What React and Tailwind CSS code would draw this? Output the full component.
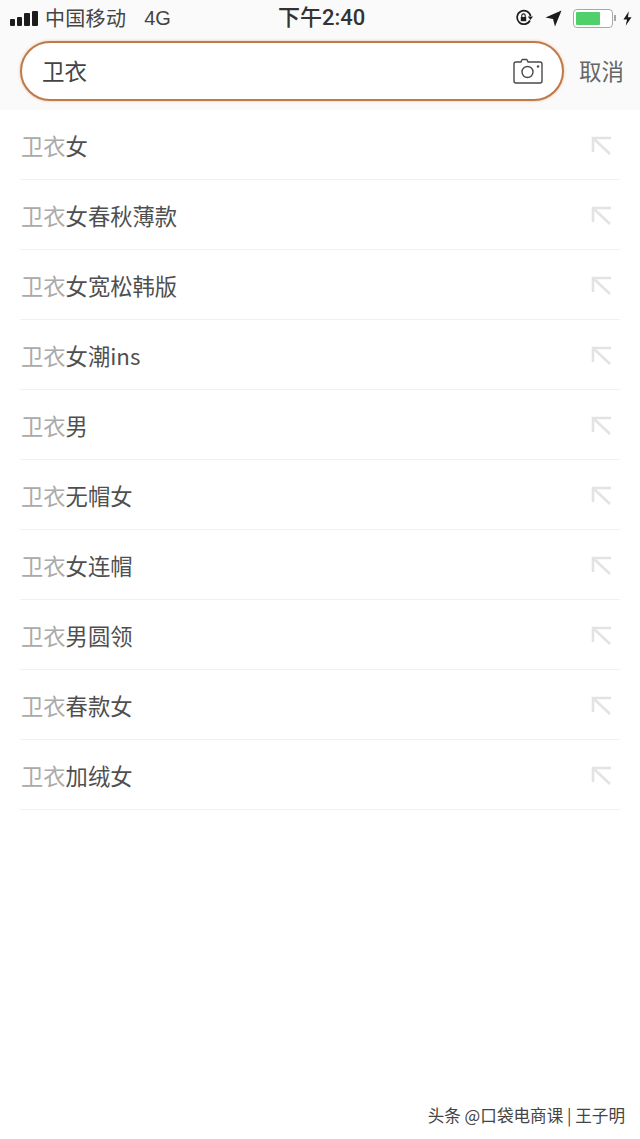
const suggestions = ['女', '女春秋薄款', '女宽松韩版', '女潮ins', '男', '无帽女', '女连帽', '男圆领', '春款女', '加绒女'];

function ArrowIcon() {
  return (
    <svg width="22" height="20" viewBox="0 0 22 20" fill="none" stroke="#e3e3e5" strokeWidth="2.6" className="mt-[1px]">
      <path d="M2 16V2H20" />
      <path d="M3 3L19 18" />
    </svg>
  );
}

function CameraIcon() {
  return (
    <svg width="32" height="30" viewBox="0 0 32 30" fill="none" stroke="#4a4a4a" strokeWidth="1.4">
      <path d="M3.5 6H9l1-2.5h0M15 3.5h-5M15 3.5l1 2.5h12a2 2 0 0 1 2 2v17a2 2 0 0 1-2 2H4a2 2 0 0 1-2-2V8a2 2 0 0 1 2-2" />
      <circle cx="15.5" cy="16" r="5.5" />
      <circle cx="26" cy="10.5" r="1.2" fill="#4a4a4a" stroke="none" />
    </svg>
  );
}

function StatusBar() {
  return (
    <div className="h-[36px] flex items-center justify-between pl-[10px] pr-[8px] text-[#2a2a2a]">
      <div className="flex items-center w-[230px]">
        <div className="flex items-end gap-[2px] h-[15px] mr-[7px]">
          <div className="w-[5px] h-[7px] bg-[#1c1c1c] rounded-[1px]" />
          <div className="w-[5px] h-[9px] bg-[#1c1c1c] rounded-[1px]" />
          <div className="w-[6px] h-[13px] bg-[#1c1c1c] rounded-[1px]" />
          <div className="w-[6px] h-[15px] bg-[#1c1c1c] rounded-[1px]" />
        </div>
        <span className="text-[20px] leading-none tracking-[0.3px] text-[#444444]">中国移动</span>
        <span className="text-[20px] leading-none ml-[18px] font-['Liberation_Sans',sans-serif] text-[#444444]">4G</span>
      </div>
      <div className="text-[22px] leading-none font-medium absolute left-[278px] font-['Roboto','Noto_Sans_CJK_SC',sans-serif] text-[#333333]">下午2:40</div>
      <div className="flex items-center">
        <svg width="18" height="18" viewBox="0 0 18 18" fill="none" className="mr-[12px]">
          <path d="M15 11.5A6.8 6.8 0 1 1 15.6 7" stroke="#1c1c1c" strokeWidth="1.7" />
          <path d="M12.8 7.5H18L15.4 11Z" fill="#1c1c1c" />
          <rect x="5.8" y="8" width="5.4" height="4.2" fill="#1c1c1c" />
          <path d="M6.8 8V6.6a1.7 1.7 0 0 1 3.4 0V8" stroke="#1c1c1c" strokeWidth="1.1" />
        </svg>
        <svg width="17" height="17" viewBox="0 0 17 17" className="mr-[11px]">
          <path d="M16.5 0.5L10 16.5L8 9L0.5 7.5Z" fill="#1c1c1c" />
        </svg>
        <div className="w-[40px] h-[19px] rounded-[4px] border-[1.5px] border-[#a8a8a8] p-[2px] bg-white">
          <div className="w-[24px] h-full bg-[#4fd06a] rounded-[1px]" />
        </div>
        <div className="w-[2px] h-[6px] bg-[#a8a8a8] ml-[1px] mr-[7px]" />
        <svg width="9" height="15" viewBox="0 0 10 16">
          <path d="M6.5 0L0.5 9H4.5L3 16L9.5 6.5H5.5Z" fill="#1c1c1c" />
        </svg>
      </div>
    </div>
  );
}

function SearchBar() {
  return (
    <div className="h-[74px] flex items-start pl-[20px] pt-[5px]">
      <div className="w-[544px] h-[60px] rounded-full border-2 border-[#bd7a4a] bg-white flex items-center justify-between pl-[20px] pr-[18px] shadow-[0_0_3px_rgba(232,150,90,0.6)]">
        <span className="text-[22.5px] leading-none text-[#444444] mb-[1px]">卫衣</span>
        <CameraIcon />
      </div>
      <span className="text-[22.5px] leading-none text-[#666666] ml-[15px] mt-[18px]">取消</span>
    </div>
  );
}

export default function App() {
  return (
    <div className="relative w-[640px] h-[1139px] overflow-hidden bg-white font-['Noto_Sans_CJK_SC','Liberation_Sans',sans-serif]">
      <div className="bg-[#fafafa]">
        <StatusBar />
        <SearchBar />
      </div>

      <div className="pl-[20px] pr-[20px]">
        {suggestions.map((s) => (
          <div key={s} className="h-[70px] flex items-center justify-between border-b border-[#f2f2f2] pl-[1px] pr-[7px] pt-[2px]">
            <span className="text-[22.3px] leading-none text-[#4f4f4f]">
              <span className="text-[#aaaaaa]">卫衣</span>
              {s}
            </span>
            <ArrowIcon />
          </div>
        ))}
      </div>

      <div className="absolute right-[15px] bottom-[13px] text-[16.6px] leading-[22px] text-[#444444]">
        头条 @口袋电商课 | 王子明
      </div>
    </div>
  );
}
